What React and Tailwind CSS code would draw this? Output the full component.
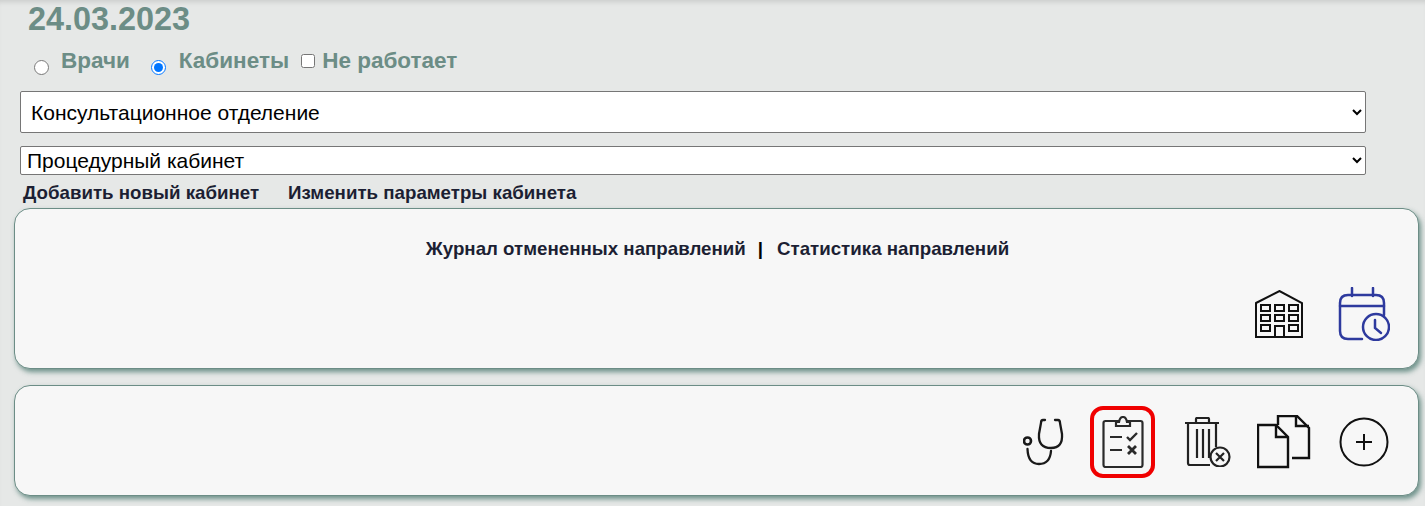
const font = { fontFamily: '"Liberation Sans", Arial, sans-serif' };

function Building() {
  return (
    <svg width="48" height="48" viewBox="0 0 48 48" fill="none" stroke="#111" strokeWidth="2" className="block">
      <path d="M1 13 L24.500 1 L47 13 V47 H1 Z" strokeWidth="2" />
      <rect x="6" y="15" width="9" height="6" /><rect x="20" y="15" width="9" height="6" /><rect x="34" y="15" width="9" height="6" />
      <rect x="6" y="25" width="9" height="6" /><rect x="20" y="25" width="9" height="6" /><rect x="34" y="25" width="9" height="6" />
      <rect x="6" y="35" width="9" height="6" /><rect x="34" y="35" width="9" height="6" />
      <path d="M20 47 V36 H29 V47" />
    </svg>
  );
}

function CalendarClock() {
  return (
    <svg width="52" height="54" viewBox="0 0 52 54" fill="none" stroke="#2e3a9e" strokeWidth="2.500" strokeLinecap="round" className="block">
      <path d="M24 52 H10 Q2 52 2 44 V16 Q2 8 10 8 H38 Q46 8 46 16 V28" />
      <path d="M2 19 H46" />
      <path d="M14 1 V9 M35 1 V9" />
      <circle cx="38" cy="40" r="13" />
      <path d="M37 33 V41 L43 46" />
    </svg>
  );
}

function Stethoscope() {
  return (
    <svg width="42" height="48" viewBox="0 0 42 48" fill="none" stroke="#1a1a1a" strokeWidth="2.300" strokeLinecap="round" className="block">
      <path d="M22 2 H20 Q18 2 18 5 L16 16 Q15 30 28 30 Q40 30 39 16 L37 5 Q37 2 35 2 H32" />
      <circle cx="4.500" cy="23" r="3.500" strokeWidth="2.600" />
      <path d="M4.500 31 Q5 46 16 46 Q27 46 28 33" />
    </svg>
  );
}

function Clipboard() {
  return (
    <svg width="42" height="52" viewBox="0 0 42 52" fill="none" stroke="#2a2a2a" strokeWidth="2.200" className="block">
      <rect x="1.500" y="5" width="39" height="46" rx="2" />
      <path d="M14 10 V6 H17 Q18 1 21 1 Q24 1 25 6 H28 V10 Z" fill="#f7f7f7" />
      <path d="M8 21 H20 M8 34 H20" strokeWidth="2.200" />
      <path d="M25 21 L28 24 L35 17" strokeWidth="2.400" />
      <path d="M26 30 L34 38 M34 30 L26 38" strokeWidth="2.800" />
    </svg>
  );
}

function Trash() {
  return (
    <svg width="46" height="50" viewBox="0 0 46 50" fill="none" stroke="#222" strokeWidth="2.200" className="block">
      <path d="M0 6 H34" />
      <path d="M11 5 V2 Q11 1 12 1 H23 Q24 1 24 2 V5" />
      <path d="M3 6 V46 Q3 48 5 48 H25" />
      <path d="M31 6 V30" />
      <path d="M12 12 V41 M18 12 V41 M24 12 V41" />
      <circle cx="35" cy="40" r="9.500" fill="#f7f7f7" />
      <path d="M31 36 L39 44 M39 36 L31 44" />
    </svg>
  );
}

function Copies() {
  return (
    <svg width="54" height="54" viewBox="0 0 54 54" fill="none" stroke="#111" strokeWidth="2.400" className="block">
      <path d="M21 10 V1 H40 L52 13 V43 H35" />
      <path d="M39 1 V11 H52" />
      <path d="M1 10 H19 L31 22 V52 H1 Z" />
      <path d="M19 10 V22 H31" />
    </svg>
  );
}

function PlusCircle() {
  return (
    <svg width="50" height="50" viewBox="0 0 50 50" fill="none" stroke="#111" strokeWidth="2" className="block">
      <circle cx="25" cy="25" r="23.500" />
      <path d="M25 17 V33 M17 25 H33" />
    </svg>
  );
}

export default function App() {
  return (
    <div style={font} className="relative h-[506px] w-[1425px] overflow-hidden bg-[#e6e8e7] shadow-[inset_0_5px_5px_-3px_rgba(0,0,0,0.12)]">
      <div className="pl-[28px] pt-[1px] text-[32.4px] font-bold leading-[37px] text-[#6c8d86]">24.03.2023</div>

      <div className="mt-[9px] flex h-[28px] items-center pl-[34px] text-[22.5px] font-bold text-[#6c8d86]">
        <input type="radio" name="mode" className="mt-[12px] h-[15px] w-[15px]" />
        <span className="ml-[12px]">Врачи</span>
        <input type="radio" name="mode" defaultChecked className="ml-[21px] mt-[12px] h-[15px] w-[15px]" />
        <span className="ml-[13px]">Кабинеты</span>
        <input type="checkbox" className="ml-[12px] h-[14px] w-[14px]" />
        <span className="ml-[7px]">Не работает</span>
      </div>

      <div className="mt-[16px] pl-[20px]">
        <select className="block h-[42px] w-[1346px] rounded-[2px] border border-[#767676] bg-white pl-[6px] text-[21px] text-black">
          <option>Консультационное отделение</option>
        </select>
        <select className="mt-[13px] block h-[29px] w-[1346px] rounded-[2px] border border-[#767676] bg-white pl-[2px] text-[21px] text-black">
          <option>Процедурный кабинет</option>
        </select>
      </div>

      <div className="mt-[7px] flex gap-[29px] pl-[23px] text-[18.72px] font-bold leading-[21px] text-[#1c1f33]">
        <span>Добавить новый кабинет</span>
        <span>Изменить параметры кабинета</span>
      </div>

      <div className="ml-[14px] mr-[6px] mt-[5px] h-[161px] rounded-[16px] border border-[#6c8d86] bg-[#f7f7f7] shadow-[2px_3px_5px_rgba(60,110,100,0.7)]">
        <div className="pl-[2px] pt-[29px] text-center text-[18.72px] font-bold leading-[21px] text-[#1c1f33]">
          <span>Журнал отмененных направлений</span>
          <span className="ml-[12px] mr-[14px] text-black">|</span>
          <span>Статистика направлений</span>
        </div>
        <div className="mt-[28px] flex items-center justify-end gap-[35px] pr-[28px]">
          <Building />
          <CalendarClock />
        </div>
      </div>

      <div className="ml-[14px] mr-[6px] mt-[16px] flex h-[111px] items-center justify-end rounded-[16px] border border-[#6c8d86] bg-[#f7f7f7] pr-[29px] pt-[2px] shadow-[2px_3px_5px_rgba(60,110,100,0.7)]">
        <Stethoscope />
        <div className="ml-[25px] flex h-[72px] w-[65px] items-center justify-center rounded-[13px] border-[4px] border-[#f00000]">
          <Clipboard />
        </div>
        <div className="ml-[30px]"><Trash /></div>
        <div className="ml-[26px]"><Copies /></div>
        <div className="ml-[28px]"><PlusCircle /></div>
      </div>
    </div>
  );
}
